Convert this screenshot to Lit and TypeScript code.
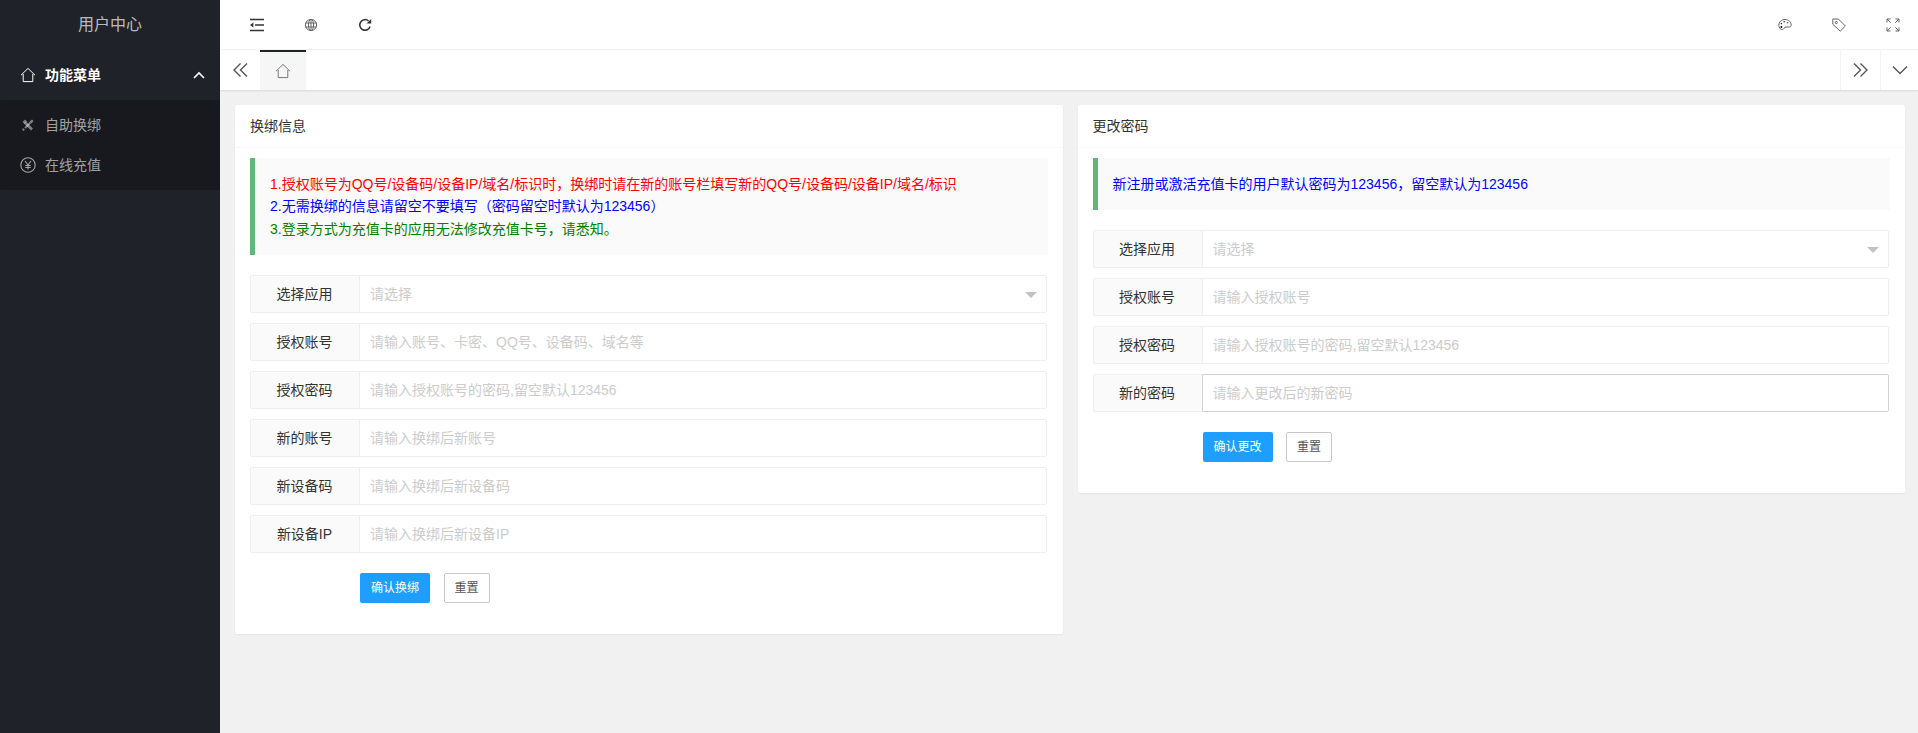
import { LitElement, html, css, svg } from 'lit';
import { customElement } from 'lit/decorators.js';

const home = svg`<path d="M1 8.200 8 1.400l7 6.800" /><path d="M3.200 7v7.600h9.600V7" />`;

const headerIcons = {
  flod: svg`<path d="M0 1.500h14M5 7h9M0 12.500h14" stroke-width="1.500"/><path d="M3.400 4.600v4.800L0 7z" fill="currentColor" stroke="none"/>`,
  globe: svg`<circle cx="7" cy="7" r="5.600" /><ellipse cx="7" cy="7" rx="2.600" ry="5.600" /><path d="M1.400 5h11.200M1.400 9h11.200M7 1.400v11.200" />`,
  refresh: svg`<path d="M12.100 8.500A5.300 5.300 0 1 1 10.600 3" stroke-width="1.500"/><path d="M13.200 1v4.600H8.600z" fill="currentColor" stroke="none"/>`,
  palette: svg`<path d="M7 1.500C3.500 1.500.8 4 .8 7.200c0 2.400 1.500 4.300 3.600 4.300 1.500 0 1.400-1.800 2.600-2.300 1.300-.5 3 .1 4.600-.2 1.100-.2 1.600-1 1.600-1.800C13.200 3.800 10.400 1.500 7 1.500z"/><circle cx="3.400" cy="5.600" r=".8" fill="#333" stroke="none"/><circle cx="6.200" cy="3.800" r=".8" fill="#333" stroke="none"/><circle cx="9.600" cy="4.800" r=".8" fill="#555" stroke="none"/><circle cx="3.400" cy="9" r="1" fill="#111" stroke="none"/>`,
  tag: svg`<path d="M.8 1h5.600l7 7-5.200 5.200-7.400-7z"/><circle cx="4.300" cy="4.500" r="1.100"/>`,
  full: svg`<path d="M1 4.500V1h3.500M1 1l3.600 3.600M13 4.500V1H9.500M13 1 9.400 4.600M1 9.500V13h3.500M1 13l3.600-3.600M13 9.500V13H9.500M13 13 9.400 9.400"/>`,
};

interface Field {
  label: string;
  hint: string;
  select?: boolean;
  focused?: boolean;
}

const bindFields: Field[] = [
  { label: '选择应用', hint: '请选择', select: true },
  { label: '授权账号', hint: '请输入账号、卡密、QQ号、设备码、域名等' },
  { label: '授权密码', hint: '请输入授权账号的密码,留空默认123456' },
  { label: '新的账号', hint: '请输入换绑后新账号' },
  { label: '新设备码', hint: '请输入换绑后新设备码' },
  { label: '新设备IP', hint: '请输入换绑后新设备IP' },
];

const passwordFields: Field[] = [
  { label: '选择应用', hint: '请选择', select: true },
  { label: '授权账号', hint: '请输入授权账号' },
  { label: '授权密码', hint: '请输入授权账号的密码,留空默认123456' },
  { label: '新的密码', hint: '请输入更改后的新密码', focused: true },
];

@customElement('app-root')
export class AppRoot extends LitElement {
  static styles = css`
    :host {
      display: grid;
      grid-template-columns: 220px 1fr;
      height: 733px;
      overflow: hidden;
      background: #f1f1f1;
      color: #333;
      font-family: 'Liberation Sans', 'Noto Sans CJK SC', sans-serif;
      font-size: 14px;
    }

    svg {
      display: block;
      fill: none;
      stroke: currentColor;
      stroke-width: 1;
    }

    /* sidebar */
    .side {
      background: #20222a;
    }
    .logo {
      height: 50px;
      line-height: 50px;
      text-align: center;
      font-size: 16px;
      color: rgba(255, 255, 255, 0.7);
    }
    .menu-title {
      display: flex;
      align-items: center;
      height: 50px;
      padding-left: 20px;
      padding-right: 15px;
      color: #fff;
      font-weight: 700;
    }
    .menu-title span {
      flex: 1;
      margin-left: 9px;
      margin-top: -2px;
    }
    .menu-list {
      padding: 5px 0;
      background: #17191e;
      border-radius: 2px;
    }
    .menu-item {
      display: flex;
      align-items: center;
      height: 40px;
      padding-left: 20px;
      color: rgba(255, 255, 255, 0.6);
    }
    .menu-item span {
      margin-left: 9px;
      margin-top: -2px;
    }
    .menu-item svg {
      color: rgba(255, 255, 255, 0.6);
    }
    .menu-item svg.tool {
      color: rgba(255, 255, 255, 0.45);
    }

    /* header and tabs */
    .main {
      display: flex;
      flex-direction: column;
      min-width: 0;
    }
    .head {
      display: flex;
      height: 49px;
      padding-left: 10px;
      margin-right: -2px;
      background: #fff;
      border-bottom: 1px solid #f4f4f4;
    }
    .head-btn {
      display: flex;
      align-items: center;
      justify-content: center;
      width: 54px;
      color: #333;
    }
    .head-btn.fade {
      color: #666;
    }
    .grow {
      flex: 1;
    }
    .tabs {
      display: flex;
      height: 40px;
      background: #fff;
      box-shadow: 0 1px 2px rgba(0, 0, 0, 0.1);
    }
    .tab-btn {
      display: flex;
      align-items: center;
      justify-content: center;
      box-sizing: border-box;
      width: 40px;
      color: #555;
    }
    .tab-btn.ruled {
      border-left: 1px solid #f4f4f4;
    }
    .tab-btn.last {
      width: 38px;
    }
    .tab-home {
      display: flex;
      align-items: center;
      justify-content: center;
      width: 46px;
      box-sizing: border-box;
      background: #f6f6f6;
      border-top: 2px solid #20222a;
      color: #777;
    }

    /* cards */
    .content {
      display: grid;
      grid-template-columns: 1fr 1fr;
      gap: 15px;
      align-items: start;
      padding: 15px 13px 0 15px;
    }
    .card {
      background: #fff;
      border-radius: 2px;
      box-shadow: 0 1px 2px rgba(0, 0, 0, 0.05);
    }
    .card-head {
      height: 42px;
      line-height: 42px;
      padding: 0 15px;
      border-bottom: 1px solid #f6f6f6;
    }
    .card-body {
      padding: 10px 16px 31px 15px;
    }
    .quote {
      margin-bottom: 20px;
      margin-right: -1px;
      padding: 15px;
      background: #fafafa;
      border-left: 5px solid #5fb878;
      border-radius: 0 2px 2px 0;
      line-height: 22.4px;
    }
    .red {
      color: #f00;
    }
    .blue {
      color: #00f;
    }
    .green {
      color: #008000;
    }

    /* form */
    .row {
      display: flex;
      height: 38px;
      margin-bottom: 10px;
      position: relative;
    }
    .row label {
      box-sizing: border-box;
      flex: none;
      width: 109px;
      line-height: 36px;
      padding-right: 1px;
      text-align: center;
      background: #fafafa;
      border: 1px solid #eee;
      border-right: none;
      border-radius: 2px 0 0 2px;
    }
    .row input {
      flex: 1;
      min-width: 0;
      box-sizing: border-box;
      padding: 0 10px;
      background: #fff;
      border: 1px solid #eee;
      border-radius: 0 2px 2px 0;
      outline: none;
      font: inherit;
      color: #333;
    }
    .row input::placeholder {
      color: #ccc;
      opacity: 1;
    }
    .row input.focused {
      border-color: #d2d2d2;
    }
    .caret {
      position: absolute;
      right: 10px;
      top: 17px;
      border-style: solid;
      border-width: 6px 6px 0;
      border-color: #c2c2c2 transparent transparent;
    }
    .actions {
      display: flex;
      gap: 13.5px;
      margin-top: 20px;
      padding-left: 110px;
    }
    .btn {
      height: 30px;
      width: 70px;
      padding: 0;
      border: none;
      border-radius: 2px;
      background: #1e9fff;
      color: #fff;
      font: inherit;
      font-size: 12px;
      line-height: 30px;
    }
    .btn.plain {
      box-sizing: border-box;
      width: 46px;
      background: #fff;
      border: 1px solid #c9c9c9;
      color: #555;
      line-height: 28px;
    }
  `;

  private renderFields(fields: Field[], submit: string) {
    return html`
      ${fields.map(
        (f) => html`
          <div class="row">
            <label>${f.label}</label>
            <input class=${f.focused ? 'focused' : ''} placeholder=${f.hint} />
            ${f.select ? html`<i class="caret"></i>` : ''}
          </div>
        `,
      )}
      <div class="actions">
        <button class="btn">${submit}</button>
        <button class="btn plain">重置</button>
      </div>
    `;
  }

  private headIcon(body: unknown, fade = false) {
    return html`<div class="head-btn ${fade ? 'fade' : ''}">
      <svg width="14" height="14" viewBox="0 0 14 14">${body}</svg>
    </div>`;
  }

  render() {
    return html`
      <aside class="side">
        <div class="logo">用户中心</div>
        <div class="menu-title">
          <svg width="16" height="16" viewBox="0 0 16 16">${home}</svg>
          <span>功能菜单</span>
          <svg width="12" height="8" viewBox="0 0 12 8" style="stroke-width:1.6"><path d="M1 7l5-5 5 5" /></svg>
        </div>
        <div class="menu-list">
          <div class="menu-item">
            <svg class="tool" width="16" height="16" viewBox="0 0 16 16">
              <path d="M5 5.500l7 7" stroke-width="2.600" />
              <path d="M2.500 5 5 2.500 7 4.500 4.500 7z" fill="currentColor" stroke="none" />
              <path d="M10.500 5.500 5 11" stroke-width="2" />
              <path d="M9.500 4.500l2.500-2 1.500 1.500-2 2.500zM3 11l2 2-1.500 1L2 12.500z" fill="currentColor" stroke="none" />
            </svg>
            <span>自助换绑</span>
          </div>
          <div class="menu-item">
            <svg width="16" height="16" viewBox="0 0 16 16" style="stroke-width:1.100">
              <circle cx="8" cy="8" r="7.200" />
              <path d="M5 4l3 4 3-4M8 8v4.500M5.200 8.500h5.600M5.200 10.500h5.600" />
            </svg>
            <span>在线充值</span>
          </div>
        </div>
      </aside>
      <div class="main">
        <header class="head">
          ${this.headIcon(headerIcons.flod)} ${this.headIcon(headerIcons.globe, true)}
          ${this.headIcon(headerIcons.refresh)}
          <div class="grow"></div>
          ${this.headIcon(headerIcons.palette, true)} ${this.headIcon(headerIcons.tag, true)}
          ${this.headIcon(headerIcons.full, true)}
        </header>
        <nav class="tabs">
          <div class="tab-btn">
            <svg width="16" height="14" viewBox="0 0 16 14" style="stroke-width:1.400"><path d="M8.500.5 2 7l6.500 6.500M15 .5 8.500 7l6.500 6.500" /></svg>
          </div>
          <div class="tab-home">
            <svg width="16" height="16" viewBox="0 0 16 16">${home}</svg>
          </div>
          <div class="grow"></div>
          <div class="tab-btn ruled">
            <svg width="16" height="14" viewBox="0 0 16 14" style="stroke-width:1.400"><path d="M1 .5 7.500 7 1 13.500M7.500.5 14 7l-6.500 6.500" /></svg>
          </div>
          <div class="tab-btn ruled last">
            <svg width="16" height="10" viewBox="0 0 16 10" style="stroke-width:1.400"><path d="M1 1.500l7 7 7-7" /></svg>
          </div>
        </nav>
        <div class="content">
          <section class="card">
            <div class="card-head">换绑信息</div>
            <div class="card-body">
              <div class="quote">
                <div class="red">1.授权账号为QQ号/设备码/设备IP/域名/标识时，换绑时请在新的账号栏填写新的QQ号/设备码/设备IP/域名/标识</div>
                <div class="blue">2.无需换绑的信息请留空不要填写（密码留空时默认为123456）</div>
                <div class="green">3.登录方式为充值卡的应用无法修改充值卡号，请悉知。</div>
              </div>
              ${this.renderFields(bindFields, '确认换绑')}
            </div>
          </section>
          <section class="card">
            <div class="card-head">更改密码</div>
            <div class="card-body">
              <div class="quote">
                <div class="blue">新注册或激活充值卡的用户默认密码为123456，留空默认为123456</div>
              </div>
              ${this.renderFields(passwordFields, '确认更改')}
            </div>
          </section>
        </div>
      </div>
    `;
  }
}
